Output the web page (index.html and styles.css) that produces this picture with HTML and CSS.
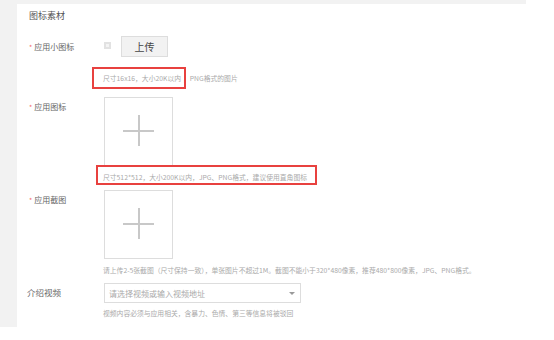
FILE: index.html
```html
<!DOCTYPE html>
<html lang="zh-CN">
<head>
  <meta charset="UTF-8">
  <title>图标素材</title>
  <link rel="stylesheet" href="styles.css">
</head>
<body>
  <div class="panel">
    <div class="card">
      <h2 class="title">图标素材</h2>

      <div class="row row-small">
        <div class="label"><span class="req">*</span>应用小图标</div>
        <div class="field">
          <div class="upload-line">
            <svg class="thumb" width="7" height="7" viewBox="0 0 7 7">
              <rect x="0" y="0" width="7" height="7" fill="#e2e2e2"/>
              <rect x="2" y="2" width="3" height="3" fill="#f4f4f4"/>
            </svg>
            <button class="btn">上传</button>
          </div>
        </div>
      </div>
      <div class="hint hint-first"><span class="mark mark-a">尺寸16x16，大小20K以内</span><span class="hint-rest">，PNG格式的图片</span></div>

      <div class="row row-icon">
        <div class="label"><span class="req">*</span>应用图标</div>
        <div class="field">
          <div class="plus-box"></div>
        </div>
      </div>
      <div class="hint hint-icon"><span class="mark mark-b">尺寸512*512，大小200K以内，JPG、PNG格式，建议使用直角图标</span></div>

      <div class="row row-shot">
        <div class="label"><span class="req">*</span>应用截图</div>
        <div class="field">
          <div class="plus-box"></div>
        </div>
      </div>
      <div class="hint hint-shot">请上传2-5张截图（尺寸保持一致），单张图片不超过1M。截图不能小于320*480像素，推荐480*800像素，JPG、PNG格式。</div>

      <div class="row row-video">
        <div class="label label-plain">介绍视频</div>
        <div class="field">
          <div class="select">
            <span class="placeholder">请选择视频或输入视频地址</span>
            <span class="caret"></span>
          </div>
        </div>
      </div>
      <div class="hint hint-video">视频内容必须与应用相关，含暴力、色情、第三等信息将被驳回</div>
    </div>
  </div>
</body>
</html>
```

FILE: styles.css
```css
body {
  margin: 0;
  background: #fff;
  font-family: "Noto Sans CJK SC", "Noto Sans", sans-serif;
  color: #666;
}
.panel {
  width: 526px;
  height: 327px;
  box-sizing: border-box;
  padding: 4px 0 0 17px;
  background: #f2f2f2;
}
.card {
  height: 100%;
  background: #fff;
  padding: 6px 0 0 12px;
  box-sizing: border-box;
}
.title {
  margin: 0;
  font-size: 9px;
  line-height: 12px;
  font-weight: normal;
  color: #555;
}
.row {
  display: flex;
}
.label {
  width: 75px;
  flex-shrink: 0;
  font-size: 8px;
  line-height: 12px;
  color: #666;
}
.label-plain {
  margin-left: -2px;
  margin-right: 2px;
}
.req {
  color: #f36b6b;
  font-size: 7px;
  margin-right: 2px;
}
.row-small {
  margin-top: 14px;
}
.row-small .label {
  padding-top: 5px;
}
.upload-line {
  display: flex;
  align-items: center;
  gap: 10px;
}
.thumb {
  display: block;
  margin-top: -2px;
}
.btn {
  width: 47px;
  height: 21px;
  padding: 0;
  border: 1px solid #ddd;
  background: #f2f2f2;
  color: #444;
  font-family: inherit;
  font-size: 10px;
}
.hint {
  padding-left: 74px;
  font-size: 6.8px;
  line-height: 10px;
  color: #aaa;
  white-space: nowrap;
}
.hint-first {
  margin-top: 16px;
}
.hint-rest {
  margin-left: 2px;
}
.mark {
  position: relative;
}
.mark::after {
  content: "";
  position: absolute;
  border: 2px solid #e8413f;
}
.mark-a::after {
  left: -11px;
  right: -5px;
  top: -6px;
  bottom: -6px;
}
.mark-b::after {
  left: -7px;
  right: -10px;
  top: -7px;
  bottom: -3px;
}
.row-icon {
  margin-top: 14px;
}
.row-icon .label,
.row-shot .label {
  padding-top: 4px;
}
.plus-box {
  position: relative;
  width: 69px;
  height: 69px;
  box-sizing: border-box;
  border: 1px solid #ddd;
}
.plus-box::before,
.plus-box::after {
  content: "";
  position: absolute;
  background: #c8c8c8;
}
.plus-box::before {
  left: 18px;
  top: 32px;
  width: 31px;
  height: 2px;
}
.plus-box::after {
  left: 33px;
  top: 17px;
  width: 2px;
  height: 31px;
}
.hint-icon {
  margin-top: 6px;
}
.row-shot {
  margin-top: 8px;
}
.hint-shot {
  margin-top: 6px;
}
.row-video {
  margin-top: 8px;
}
.row-video .label {
  padding-top: 3px;
  font-size: 8.5px;
}
.select {
  width: 197px;
  height: 20px;
  box-sizing: border-box;
  border: 1px solid #ddd;
  display: flex;
  align-items: center;
  justify-content: space-between;
  padding: 0 5px 0 4px;
}
.placeholder {
  font-size: 8px;
  color: #aaa;
}
.caret {
  width: 0;
  height: 0;
  border-left: 3px solid transparent;
  border-right: 3px solid transparent;
  border-top: 3px solid #999;
}
.hint-video {
  margin-top: 5px;
}
```
